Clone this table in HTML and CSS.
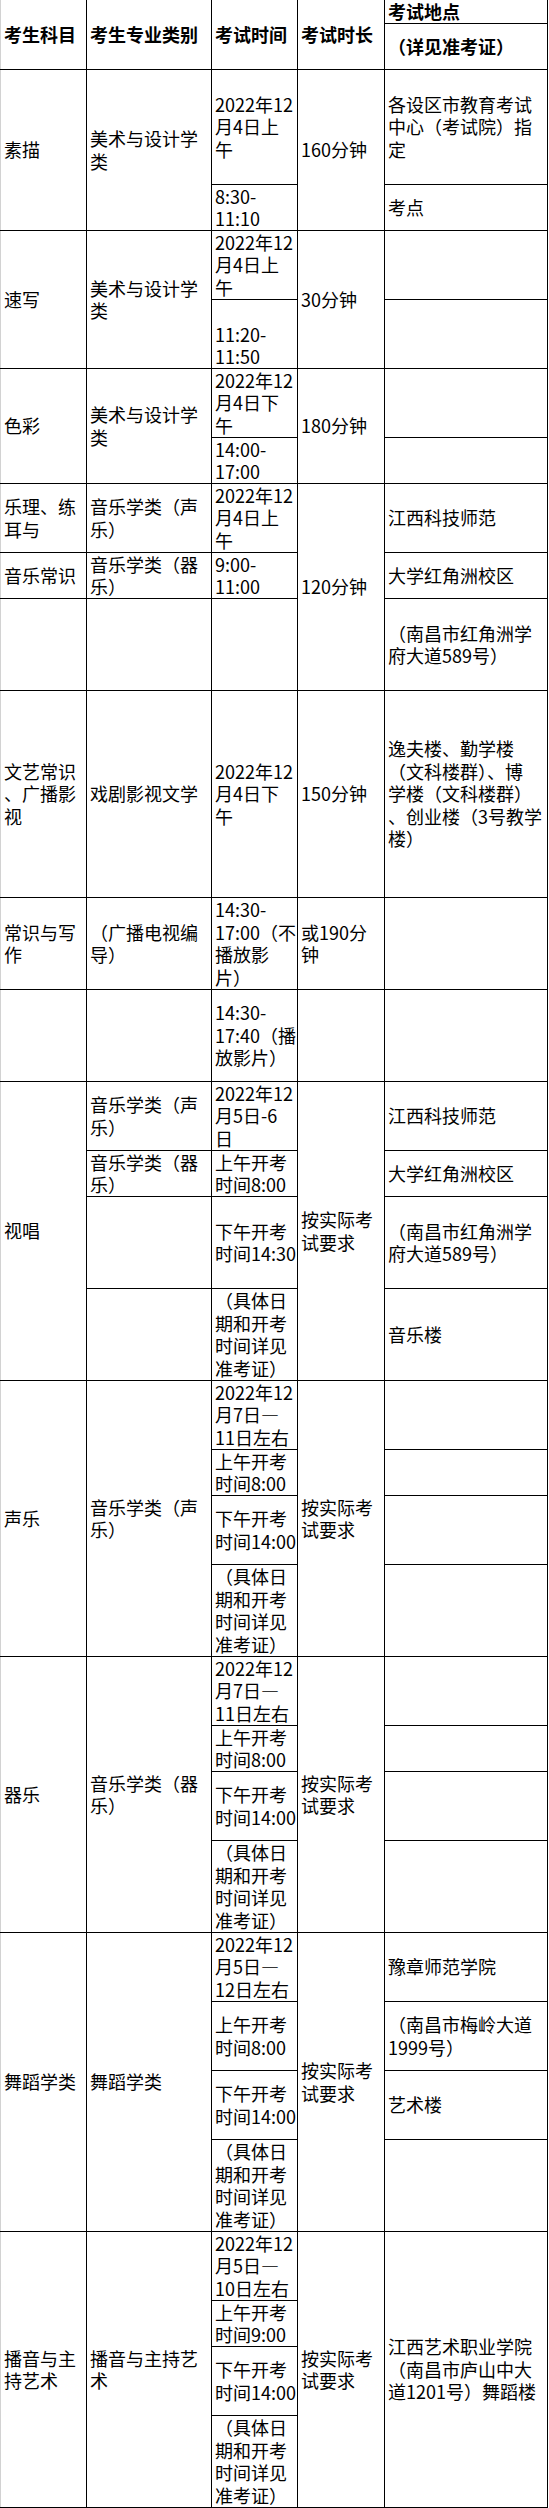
FILE: index.html
```html
<!DOCTYPE html>
<html lang="zh-CN">
<head>
<meta charset="utf-8">
<title>考试安排</title>
<link rel="stylesheet" href="styles.css">
</head>
<body>
<table class="exam">
  <colgroup>
    <col class="w-a"><col class="w-b"><col class="w-c"><col class="w-d"><col class="w-e">
  </colgroup>
  <tr class="u1">
    <th rowspan="2" class="ca">考生科目</th><th rowspan="2">考生专业类别</th><th rowspan="2">考试时间</th><th rowspan="2">考试时长</th><th class="one">考试地点</th>
  </tr>
  <tr class="u2"><th>（详见准考证）</th></tr>

  <tr class="u5">
    <td rowspan="2" class="ca">素描</td><td rowspan="2">美术与设计学<br>类</td><td>2022年12<br>月4日上<br>午</td><td rowspan="2">160分钟</td><td>各设区市教育考试<br>中心（考试院）指<br>定</td>
  </tr>
  <tr class="u2"><td>8:30-<br>11:10</td><td>考点</td></tr>

  <tr class="u3">
    <td rowspan="2" class="ca">速写</td><td rowspan="2">美术与设计学<br>类</td><td>2022年12<br>月4日上<br>午</td><td rowspan="2">30分钟</td><td></td>
  </tr>
  <tr class="u3"><td class="vb">11:20-<br>11:50</td><td></td></tr>

  <tr class="u3">
    <td rowspan="2" class="ca">色彩</td><td rowspan="2">美术与设计学<br>类</td><td>2022年12<br>月4日下<br>午</td><td rowspan="2">180分钟</td><td></td>
  </tr>
  <tr class="u2"><td>14:00-<br>17:00</td><td></td></tr>

  <tr class="u3">
    <td class="ca">乐理、练<br>耳与</td><td>音乐学类（声<br>乐）</td><td>2022年12<br>月4日上<br>午</td><td rowspan="3">120分钟</td><td>江西科技师范</td>
  </tr>
  <tr class="u2"><td class="ca">音乐常识</td><td>音乐学类（器<br>乐）</td><td>9:00-<br>11:00</td><td>大学红角洲校区</td></tr>
  <tr class="u4"><td class="ca"></td><td></td><td></td><td>（南昌市红角洲学<br>府大道589号）</td></tr>

  <tr class="u9">
    <td class="ca">文艺常识<br>、广播影<br>视</td><td>戏剧影视文学</td><td>2022年12<br>月4日下<br>午</td><td>150分钟</td><td>逸夫楼、勤学楼<br>（文科楼群）、博<br>学楼（文科楼群）<br>、创业楼（3号教学<br>楼）</td>
  </tr>

  <tr class="u4">
    <td class="ca">常识与写<br>作</td><td>（广播电视编<br>导）</td><td>14:30-<br>17:00（不<br>播放影<br>片）</td><td>或190分<br>钟</td><td></td>
  </tr>
  <tr class="u4"><td class="ca"></td><td></td><td>14:30-<br>17:40（播<br>放影片）</td><td></td><td></td></tr>

  <tr class="u3">
    <td rowspan="4" class="ca">视唱</td><td>音乐学类（声<br>乐）</td><td>2022年12<br>月5日-6<br>日</td><td rowspan="4">按实际考<br>试要求</td><td>江西科技师范</td>
  </tr>
  <tr class="u2"><td>音乐学类（器<br>乐）</td><td>上午开考<br>时间8:00</td><td>大学红角洲校区</td></tr>
  <tr class="u4"><td></td><td>下午开考<br>时间14:30</td><td>（南昌市红角洲学<br>府大道589号）</td></tr>
  <tr class="u4"><td></td><td>（具体日<br>期和开考<br>时间详见<br>准考证）</td><td>音乐楼</td></tr>

  <tr class="u3">
    <td rowspan="4" class="ca">声乐</td><td rowspan="4">音乐学类（声<br>乐）</td><td>2022年12<br>月7日—<br>11日左右</td><td rowspan="4">按实际考<br>试要求</td><td></td>
  </tr>
  <tr class="u2"><td>上午开考<br>时间8:00</td><td></td></tr>
  <tr class="u3"><td>下午开考<br>时间14:00</td><td></td></tr>
  <tr class="u4"><td>（具体日<br>期和开考<br>时间详见<br>准考证）</td><td></td></tr>

  <tr class="u3">
    <td rowspan="4" class="ca">器乐</td><td rowspan="4">音乐学类（器<br>乐）</td><td>2022年12<br>月7日—<br>11日左右</td><td rowspan="4">按实际考<br>试要求</td><td></td>
  </tr>
  <tr class="u2"><td>上午开考<br>时间8:00</td><td></td></tr>
  <tr class="u3"><td>下午开考<br>时间14:00</td><td></td></tr>
  <tr class="u4"><td>（具体日<br>期和开考<br>时间详见<br>准考证）</td><td></td></tr>

  <tr class="u3">
    <td rowspan="4" class="ca">舞蹈学类</td><td rowspan="4">舞蹈学类</td><td>2022年12<br>月5日—<br>12日左右</td><td rowspan="4">按实际考<br>试要求</td><td>豫章师范学院</td>
  </tr>
  <tr class="u3"><td>上午开考<br>时间8:00</td><td>（南昌市梅岭大道<br>1999号）</td></tr>
  <tr class="u3"><td>下午开考<br>时间14:00</td><td>艺术楼</td></tr>
  <tr class="u4"><td>（具体日<br>期和开考<br>时间详见<br>准考证）</td><td></td></tr>

  <tr class="u3">
    <td rowspan="4" class="ca">播音与主<br>持艺术</td><td rowspan="4">播音与主持艺<br>术</td><td>2022年12<br>月5日—<br>10日左右</td><td rowspan="4">按实际考<br>试要求</td><td rowspan="4">江西艺术职业学院<br>（南昌市庐山中大<br>道1201号）舞蹈楼</td>
  </tr>
  <tr class="u2"><td>上午开考<br>时间9:00</td></tr>
  <tr class="u3"><td>下午开考<br>时间14:00</td></tr>
  <tr class="u4"><td>（具体日<br>期和开考<br>时间详见<br>准考证）</td></tr>
</table>
</body>
</html>
```

FILE: styles.css
```css
html, body {
  margin: 0;
  padding: 0;
  background: #ffffff;
}

body {
  font-family: "Noto Sans CJK SC", "Noto Sans", sans-serif;
  color: #000000;
}

.exam {
  border-collapse: collapse;
  table-layout: fixed;
  width: 548px;
  font-size: 18px;
  line-height: 22.5px;
}

.w-a { width: 86px; }
.w-b { width: 125px; }
.w-c { width: 86px; }
.w-d { width: 87px; }
.w-e { width: 163px; }

.exam th,
.exam td {
  border: 1px solid #000000;
  padding: 0 2px 0 3px;
  vertical-align: middle;
  text-align: left;
  white-space: nowrap;
  overflow: visible;
}

.exam th {
  font-weight: bold;
}

.exam th.one {
  line-height: 22px;
}

.exam tr:first-child th {
  border-top: none;
}

.exam .ca {
  border-left: 1px solid #d2d2d2;
}

.exam .vb {
  vertical-align: bottom;
}

.u1 { height: 23px; }
.u2 { height: 46px; }
.u3 { height: 69px; }
.u4 { height: 92px; }
.u5 { height: 115px; }
.u9 { height: 207px; }
```
